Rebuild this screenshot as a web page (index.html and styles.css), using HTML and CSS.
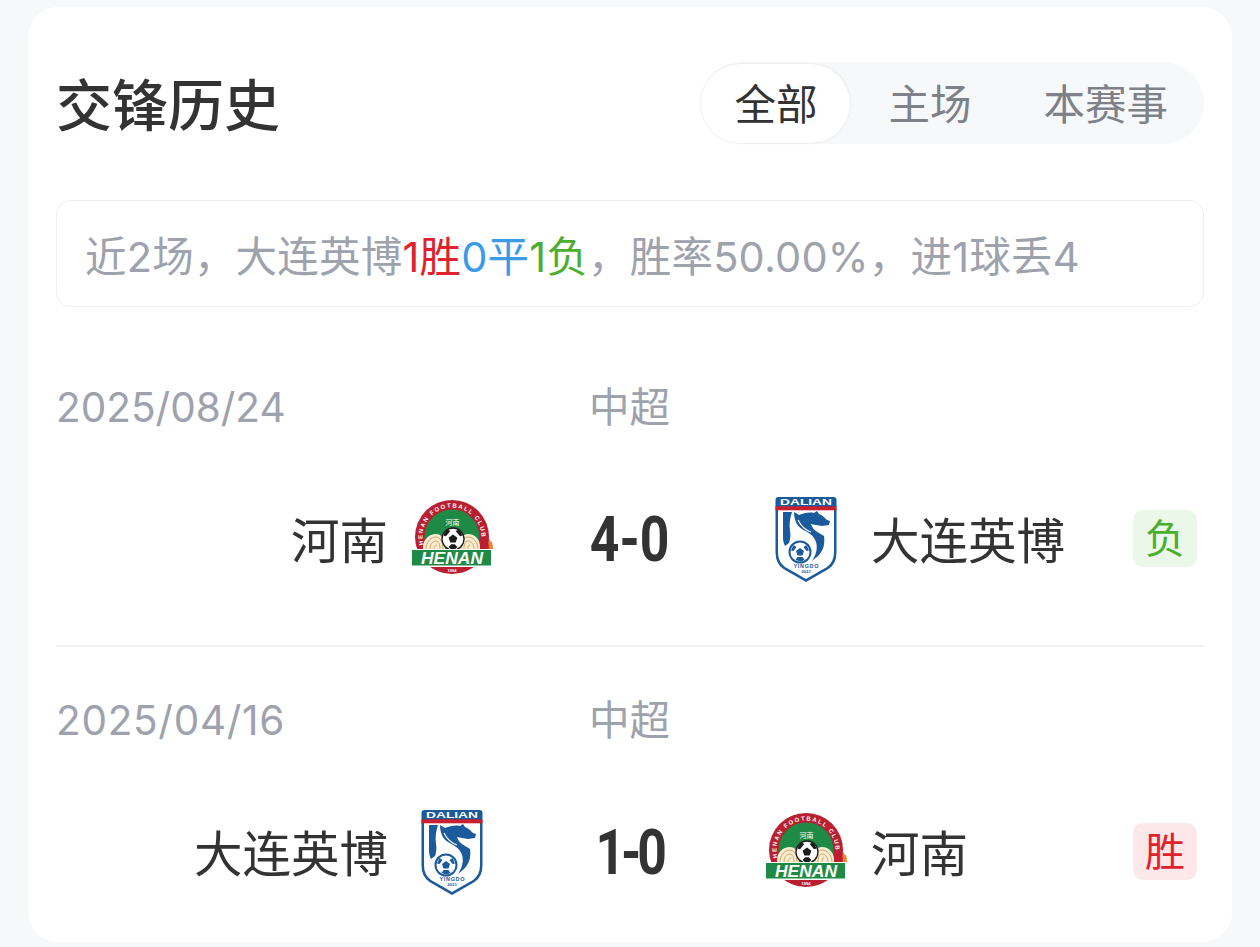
FILE: index.html
```html
<!DOCTYPE html>
<html lang="zh-CN">
<head>
    <meta charset="UTF-8">
    <meta name="viewport" content="width=device-width, initial-scale=1.0">
    <title>交锋历史</title>
    <link rel="stylesheet" href="styles.css">
</head>
<body>

    <svg class="sprites" width="0" height="0">
        <defs>
            <symbol id="logoHenan" viewBox="0 0 85 85">
                <path d="M70 41c1-3 3-1 4 0 1-2 2-1 3 1 2-1 3 0 3 2 2 0 3 3 3 8H68z" fill="#e8873a"/>
                <path d="M72 43c1 2 3 1 4 3 1-1 2 0 3 2v4h-9z" fill="#c9302c"/>
                <circle cx="42" cy="40" r="37" fill="#b91f30"/>
                <circle cx="42" cy="40" r="27.500" fill="#1f8a45"/>
                <path d="M13 52c-1-9 6-15 13-15 5 0 9 4 9 15zM49 52c0-11 4-15 9-15 7 0 13 6 12 15z" fill="#f6ecd4"/>
                <path d="M16 52c0-7 5-12 10-12 4 0 7 5 7 12M20 52c0-5 3-8 6-8 3 0 4 4 4 8M24 52c0-2 1-4 3-4M51 52c0-7 3-12 7-12 5 0 10 5 10 12M54 52c0-4 1-8 4-8 3 0 6 3 6 8M58 52c0-2 0-4 2-4" fill="none" stroke="#d9a55e" stroke-width="1"/>
                <g transform="translate(43 42) scale(.88) translate(-43 -37)">
                    <circle cx="43" cy="37" r="12.500" fill="#fff" stroke="#1c1c1c" stroke-width="1.500"/>
                    <path d="M43 32l5 3.500-2 5.500h-6l-2-5.500zM36 26l4 2-5 6-3-1zM50 26l-4 2 5 6 3-1zM38 46l3-3h4l3 3-3 3h-4z" fill="#1c1c1c"/>
                </g>
                <rect x="1" y="52" width="81" height="18" fill="#fff"/>
                <rect x="2" y="53" width="79" height="15.500" fill="#1f8a45"/>
                <text class="logo-word logo-italic" x="42" y="66.500" text-anchor="middle" font-size="16" textLength="62" lengthAdjust="spacingAndGlyphs" fill="#fff">HENAN</text>
                <text class="logo-cjk" x="42.500" y="27.500" text-anchor="middle" font-size="7" fill="#fff">河南</text>
                <path id="henanArc" d="M13.500 47.600a29.500 29.500 0 1 1 57 0" fill="none"/>
                <text class="logo-word" font-size="6" fill="#fff" textLength="100"><textPath href="#henanArc">HENAN FOOTBALL CLUB</textPath></text>
                <text class="logo-word" x="42" y="75" text-anchor="middle" font-size="4" fill="#fff">1994</text>
            </symbol>
            <symbol id="logoDalian" viewBox="0 0 85 85">
                <path d="M11.500 3q0-3 3-3h55q3 0 3 3v52q0 12-8 17L42 85 19.500 72q-8-5-8-17z" fill="#1b5a9b"/>
                <path d="M14 13h56v42q0 10-7 15L42 82 21 70q-7-5-7-15z" fill="#fff"/>
                <rect x="11.500" y="9.300" width="61" height="4" fill="#c8202f"/>
                <text class="logo-word" x="42" y="8.300" text-anchor="middle" font-size="9" textLength="52" lengthAdjust="spacingAndGlyphs" fill="#fff">DALIAN</text>
                <path d="M19 15h9c-2 6-3 12-2 19 1 4 0 9-1 12l-4 3c-1-2-2-5-2-8z" fill="#1b5a9b"/>
                <path d="M30 15l5 3c5-2 10-3 15-2l3-2 2 3c3 1 5 3 8 6l3 1-1 4-7 1-6-1-5-1c1 4 4 7 8 9l5 3c1 7 0 14-6 20l-6 5c4-6 6-13 4-19-2-7-9-10-14-13-5-3-8-9-8-17z" fill="#1b5a9b"/>
                <path d="M34 23c3 6 7 10 13 12M32 28c3 6 8 10 14 12M35 37c3 3 7 5 11 7" fill="none" stroke="#fff" stroke-width="1.200"/>
                <circle cx="36" cy="55" r="10.500" fill="#fff" stroke="#1b5a9b" stroke-width="2"/>
                <path d="M36 51l4 3-1.500 4.500h-5L32 54zM29.500 48l3 2-3 4-2.500-.5zM42.500 48l-3 2 3 4 2.500-.5zM31.500 63l2-3h5l2 3-4 1.500z" fill="#1b5a9b"/>
                <text class="logo-word" x="42" y="71" text-anchor="middle" font-size="5.500" textLength="25" fill="#1b5a9b">YINGDO</text>
                <text class="logo-word" x="42" y="76" text-anchor="middle" font-size="4.300" fill="#1b5a9b">2021</text>
            </symbol>
        </defs>
    </svg>

    <div class="card">
        <div class="card-head">
            <h2 class="card-title">交锋历史</h2>
            <div class="tabs">
                <span class="tab tab-active">全部</span>
                <span class="tab">主场</span>
                <span class="tab">本赛事</span>
            </div>
        </div>

        <div class="summary">近2场，大连英博<span class="red">1胜</span><span class="blue">0平</span><span class="green">1负</span>，胜率50.00%，进1球丢4</div>

        <div class="match-list">
            <div class="match">
                <div class="match-meta">
                    <span class="match-date">2025/08/24</span>
                    <span class="match-league">中超</span>
                </div>
                <div class="match-teams">
                    <div class="team team-home">
                        <span class="team-name">河南</span>
                        <svg class="team-logo"><use href="#logoHenan"/></svg>
                    </div>
                    <div class="score"><span class="score-num">4-0</span></div>
                    <div class="team">
                        <svg class="team-logo"><use href="#logoDalian"/></svg>
                        <span class="team-name">大连英博</span>
                    </div>
                    <span class="result result-lose">负</span>
                </div>
            </div>

            <div class="match">
                <div class="match-meta">
                    <span class="match-date match-date-wide">2025/04/16</span>
                    <span class="match-league">中超</span>
                </div>
                <div class="match-teams">
                    <div class="team team-home">
                        <span class="team-name">大连英博</span>
                        <svg class="team-logo"><use href="#logoDalian"/></svg>
                    </div>
                    <div class="score"><span class="score-num score-num-tight">1-0</span></div>
                    <div class="team">
                        <svg class="team-logo"><use href="#logoHenan"/></svg>
                        <span class="team-name">河南</span>
                    </div>
                    <span class="result result-win">胜</span>
                </div>
            </div>
        </div>
    </div>

</body>
</html>
```

FILE: styles.css
```css
* {
    box-sizing: border-box;
}

body {
    background-color: #F7F8FA;
    font-family: Inter, "Noto Sans CJK SC", sans-serif;
    color: #333;
    margin: 0;
    padding: 7px 28px 0;
    height: 947px;
    overflow: hidden;
}

.sprites {
    display: block;
    height: 0;
}

.logo-word {
    font-family: "Liberation Sans", sans-serif;
    font-weight: 700;
}

.logo-italic {
    font-style: italic;
}

.logo-cjk {
    font-family: "Noto Sans CJK SC", sans-serif;
}

.card {
    background-color: #fff;
    border-radius: 30px;
    padding: 55px 28px 0;
    height: 935px;
}

.card-head {
    display: flex;
    justify-content: space-between;
    align-items: center;
}

.card-title {
    margin: 6px 0 0;
    font-size: 56px;
    font-weight: 500;
    line-height: 76px;
}

.tabs {
    display: flex;
    height: 82px;
    padding: 2px 0 1px;
    background-color: #F7F8FA;
    border-radius: 41px;
}

.tab {
    display: flex;
    align-items: center;
    padding: 0 36px 4px;
    font-size: 41.5px;
    color: #7E8188;
    white-space: nowrap;
}

.tab-active {
    background-color: #fff;
    color: #333;
    border-radius: 40px;
    box-shadow: 0 0 3px rgba(0, 0, 0, 0.1);
    padding: 0 33px 4px;
    margin-right: 2px;
}

.summary {
    margin-top: 56px;
    height: 107px;
    padding: 0 28px;
    display: flex;
    align-items: center;
    border: 1px solid #EEEFF1;
    border-radius: 14px;
    font-size: 41.5px;
    letter-spacing: 0.2px;
    color: #9EA2AD;
    white-space: nowrap;
}

.red {
    color: #E0222F;
}

.blue {
    color: #3B9BE8;
}

.green {
    color: #4BAE2F;
}

.match-list {
    margin-top: 27px;
}

.match {
    padding: 43px 0 63px;
    border-bottom: 2px solid #EEEFF1;
}

.match:last-child {
    padding-bottom: 0;
    border-bottom: none;
}

.match-meta {
    display: grid;
    grid-template-columns: 533px 1fr;
    height: 60px;
    line-height: 62px;
    font-size: 40.5px;
    color: #9EA2AD;
    margin-bottom: 60px;
}

.match-date-wide {
    letter-spacing: 0.7px;
}

.match-teams {
    display: grid;
    grid-template-columns: 439px 269px 369px 64px;
    align-items: center;
    height: 85px;
}

.team {
    display: flex;
    align-items: center;
    gap: 22px;
}

.team-home {
    justify-content: flex-end;
}

.team-name {
    font-size: 48.5px;
    white-space: nowrap;
    padding-bottom: 4px;
}

.team-logo {
    width: 85px;
    height: 85px;
    flex-shrink: 0;
}

.score {
    text-align: center;
    font-family: Roboto, sans-serif;
    font-size: 63px;
    font-weight: 700;
    line-height: 85px;
}

.score-num {
    display: inline-block;
    transform: scaleX(0.82);
}

.score-num-tight {
    letter-spacing: -5px;
}

.result {
    width: 64px;
    height: 57px;
    line-height: 57px;
    text-align: center;
    border-radius: 10px;
    font-size: 40px;
    margin-top: -2px;
}

.result-lose {
    background-color: #EBF7E8;
    color: #4BAE2F;
}

.result-win {
    background-color: #FDE8E9;
    color: #E0222F;
}
```
